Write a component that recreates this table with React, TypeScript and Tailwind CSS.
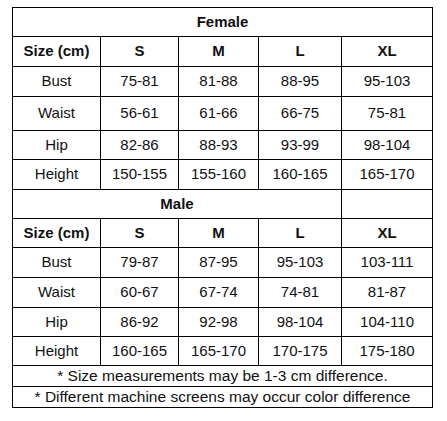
const female = [
  ["Bust", "75-81", "81-88", "88-95", "95-103"],
  ["Waist", "56-61", "61-66", "66-75", "75-81"],
  ["Hip", "82-86", "88-93", "93-99", "98-104"],
  ["Height", "150-155", "155-160", "160-165", "165-170"],
];

const male = [
  ["Bust", "79-87", "87-95", "95-103", "103-111"],
  ["Waist", "60-67", "67-74", "74-81", "81-87"],
  ["Hip", "86-92", "92-98", "98-104", "104-110"],
  ["Height", "160-165", "165-170", "170-175", "175-180"],
];

const femaleHeights = ["h-[30px]", "h-[34px]", "h-[29px]", "h-[30px]"];
const maleHeights = ["h-[30px]", "h-[30px]", "h-[29px]", "h-[29px]"];

const cell = "border border-black text-center align-middle p-0";

function SizeHead({ h }: { h: string }) {
  return (
    <tr className={h}>
      <td className={`${cell} font-bold`}>Size (cm)</td>
      <td className={`${cell} font-bold`}>S</td>
      <td className={`${cell} font-bold`}>M</td>
      <td className={`${cell} font-bold`}>L</td>
      <td className={`${cell} font-bold`}>XL</td>
    </tr>
  );
}

export default function App() {
  return (
    <div className="w-[447px] h-[421px] bg-white pt-[7px] pl-[12px] text-[15px] text-[#111] font-['Liberation_Sans',Arial,sans-serif]">
      <table className="w-[420px] table-fixed border-collapse border border-black">
        <colgroup>
          <col className="w-[88px]" />
          <col className="w-[78px]" />
          <col className="w-[80px]" />
          <col className="w-[83px]" />
          <col className="w-[91px]" />
        </colgroup>
        <tbody>
          <tr className="h-[29px]">
            <td colSpan={5} className={`${cell} font-bold`}>Female</td>
          </tr>
          <SizeHead h="h-[30px]" />
          {female.map((row, i) => (
            <tr key={row[0]} className={femaleHeights[i]}>
              {row.map((v, j) => (
                <td key={j} className={cell}>{v}</td>
              ))}
            </tr>
          ))}
          <tr className="h-[29px]">
            <td colSpan={4} className={`${cell} font-bold`}>Male</td>
            <td className={cell}></td>
          </tr>
          <SizeHead h="h-[29px]" />
          {male.map((row, i) => (
            <tr key={row[0]} className={maleHeights[i]}>
              {row.map((v, j) => (
                <td key={j} className={cell}>{v}</td>
              ))}
            </tr>
          ))}
          {/* footnotes */}
          <tr className="h-[21px]">
            <td colSpan={5} className={`${cell} leading-none text-[15.5px]`}>* Size measurements may be 1-3 cm difference.</td>
          </tr>
          <tr className="h-[21px]">
            <td colSpan={5} className={`${cell} leading-none text-[15.5px]`}>* Different machine screens may occur color difference</td>
          </tr>
        </tbody>
      </table>
    </div>
  );
}
